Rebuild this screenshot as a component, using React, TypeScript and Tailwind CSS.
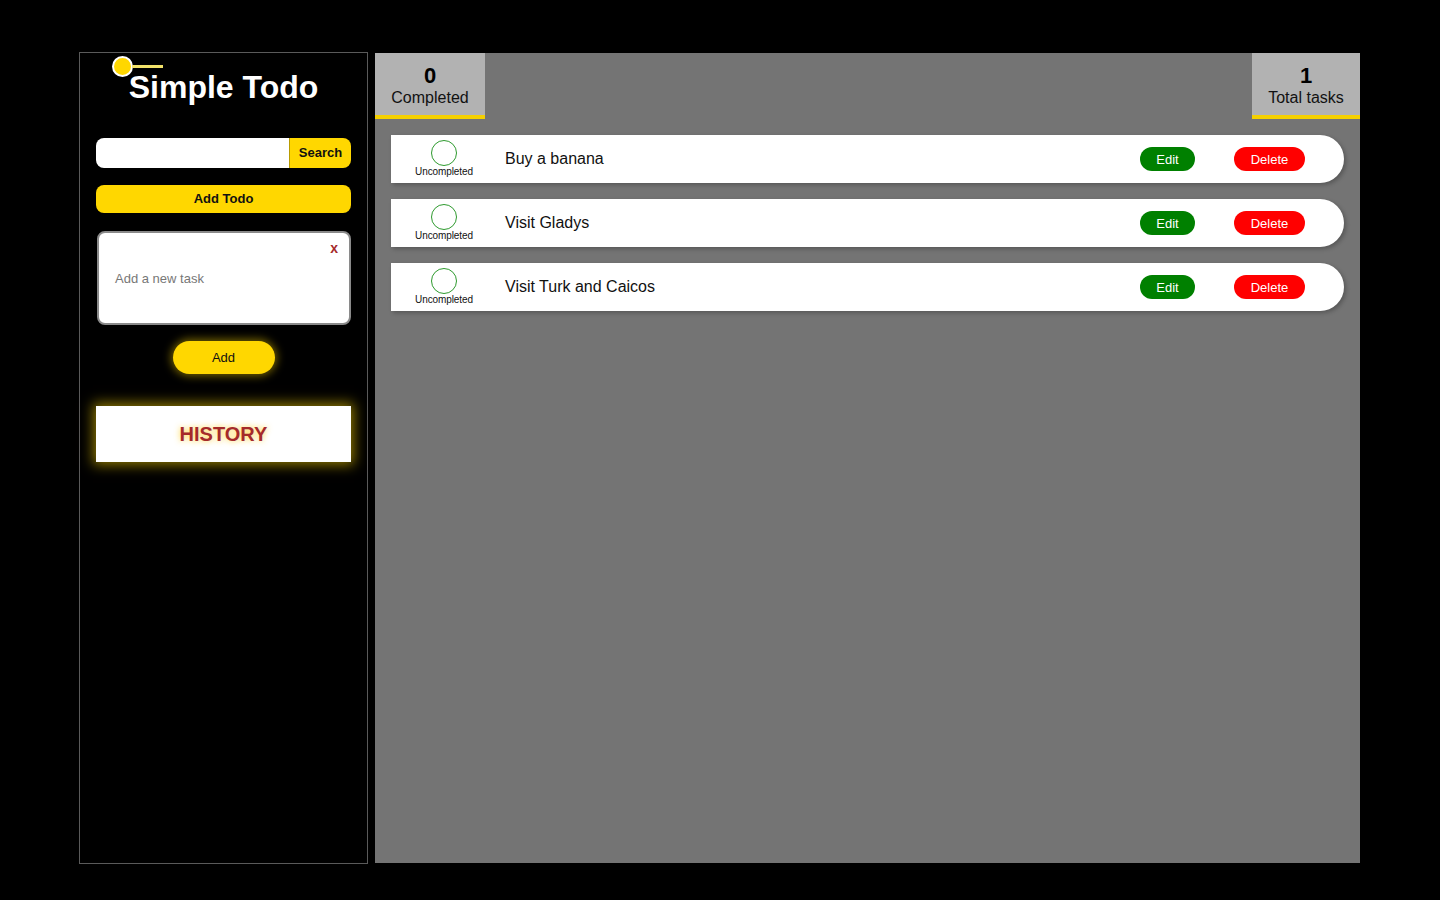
import React from "react";

const tasks = ["Buy a banana", "Visit Gladys", "Visit Turk and Caicos"];

export default function App() {
  return (
    <div className="w-[1440px] h-[900px] bg-black flex pt-[52px] pl-[79px] gap-[7px]" style={{ fontFamily: '"Liberation Sans", Arial, sans-serif' }}>
      <aside className="w-[289px] h-[812px] border border-[#5a5a5a] flex flex-col px-[16px] relative">
        <div className="absolute left-[32px] top-[3px] flex items-center">
          <div className="w-[21px] h-[21px] rounded-full bg-[#ffd700] border-2 border-white" />
          <div className="w-[31px] h-[3px] bg-[#f2e26a] -ml-[1px]" />
        </div>
        <h1 className="text-white font-bold text-[32px] leading-[36px] text-center mt-[16px]">Simple Todo</h1>
        <div className="flex mt-[33px] h-[30px]">
          <input className="w-[193px] bg-white rounded-l-[8px] outline-none" />
          <button className="w-[62px] bg-[#ffd700] rounded-r-[8px] text-[13px] font-bold text-[#111] border-l border-[#b89b00]">Search</button>
        </div>
        <button className="mt-[17px] h-[28px] w-[255px] bg-[#ffd700] rounded-[8px] text-[13px] font-bold text-[#111]">Add Todo</button>
        <div className="mt-[18px] ml-[1px] w-[254px] h-[94px] bg-white rounded-[8px] border-2 border-[#8a8a8a] relative">
          <span className="absolute right-[11px] top-[5px] text-[#a52a2a] font-bold text-[14px]">x</span>
          <div className="pl-[16px] pt-[36px] text-[13px] text-[#777]">Add a new task</div>
        </div>
        <div className="flex justify-center mt-[16px]">
          <button className="w-[102px] h-[33px] rounded-full bg-[#ffd700] text-[13px] text-[#111] shadow-[0_0_8px_2px_rgba(255,215,0,0.45)]">Add</button>
        </div>
        <div className="mt-[32px] h-[56px] w-[255px] bg-white flex items-center justify-center shadow-[0_0_12px_3px_rgba(255,215,0,0.55)]">
          <span className="text-[20px] font-bold text-[#a52a2a]" style={{ textShadow: "0 0 6px rgba(255,200,0,0.8)" }}>HISTORY</span>
        </div>
      </aside>
      <main className="w-[985px] h-[810px] mt-[1px] bg-[#747474] flex flex-col">
        <div className="flex justify-between">
          <div className="w-[110px] h-[66px] bg-[#b2b2b2] border-b-4 border-[#f5d000] flex flex-col items-center pt-[11px]">
            <span className="text-[22px] font-bold leading-[24px] text-black">0</span>
            <span className="text-[16px] leading-[20px] text-[#111]">Completed</span>
          </div>
          <div className="w-[108px] h-[66px] bg-[#b2b2b2] border-b-4 border-[#f5d000] flex flex-col items-center pt-[11px]">
            <span className="text-[22px] font-bold leading-[24px] text-black">1</span>
            <span className="text-[16px] leading-[20px] text-[#111]">Total tasks</span>
          </div>
        </div>
        <div className="flex flex-col gap-[16px] pl-[16px] pr-[16px] mt-[16px]">
          {tasks.map((t) => (
            <div key={t} className="h-[48px] bg-white rounded-r-[24px] flex items-center shadow-[2px_2px_4px_rgba(0,0,0,0.25)]">
              <div className="w-[106px] flex flex-col items-center">
                <div className="w-[26px] h-[26px] rounded-full border border-[#2e9a2e]" />
                <span className="text-[10px] leading-[12px] text-[#111] mt-[0px] tracking-[-0.1px]">Uncompleted</span>
              </div>
              <span className="ml-[8px] text-[16px] text-[#111] flex-1">{t}</span>
              <button className="w-[55px] h-[24px] rounded-full bg-[#008000] text-white text-[13px] pt-[1px]">Edit</button>
              <button className="ml-[39px] mr-[39px] w-[71px] h-[24px] rounded-full bg-[#ff0000] text-white text-[13px] pt-[1px]">Delete</button>
            </div>
          ))}
        </div>
      </main>
    </div>
  );
}
